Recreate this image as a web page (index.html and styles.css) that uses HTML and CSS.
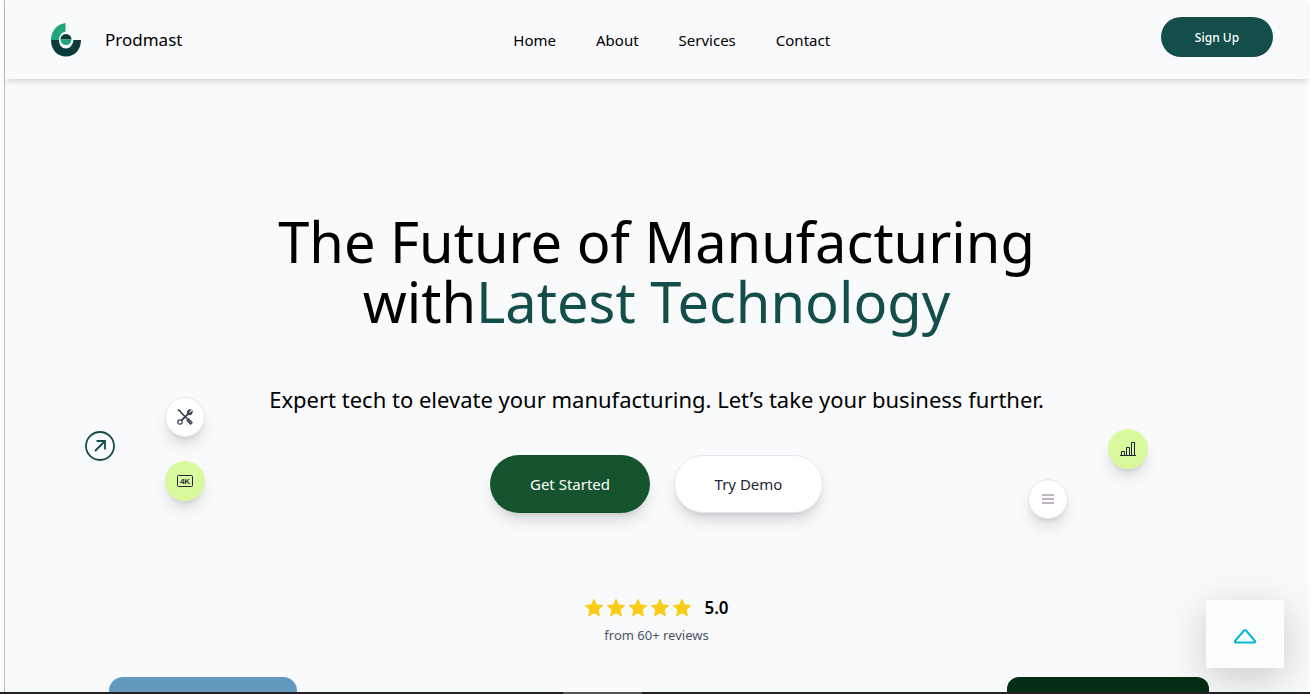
FILE: index.html
```html
<!DOCTYPE html>
<html lang="en">
<head>
<meta charset="utf-8">
<title>Prodmast</title>
<link rel="stylesheet" href="styles.css">
</head>
<body>
<div class="page">
  <header class="header">
    <a class="brand" href="#">
      <svg class="brand-logo" viewBox="0 0 32 36" aria-hidden="true">
        <path fill="#1fa67a" d="M1 18C1 9 7 2 15.500 1V9.500C11.500 10.500 9 14 9 18Z"/>
        <path fill="#0b3b3c" d="M1 18H9C9 23 12 26.500 16 26.500S22.500 23.500 23.500 18H31C31 28 24.500 34.500 16 34.500S1 28 1 18Z"/>
        <path fill="#0b3b3c" d="M10.500 17.500a5.500 5.500 0 0 1 11 0Z"/>
        <path fill="#1fa67a" d="M10.500 17.500a5.500 5.500 0 0 0 11 0Z"/>
      </svg>
      <span>Prodmast</span>
    </a>
    <nav class="nav">
      <a href="#">Home</a>
      <a href="#">About</a>
      <a href="#">Services</a>
      <a href="#">Contact</a>
    </nav>
    <button class="signup" type="button">Sign Up</button>
  </header>

  <main class="hero">
    <h1 class="title">The Future of Manufacturing<br>with<span class="accent">Latest Technology</span></h1>
    <p class="lead">Expert tech to elevate your manufacturing. Let’s take your business further.</p>
    <div class="actions">
      <button class="btn btn-primary" type="button">Get Started</button>
      <button class="btn btn-plain" type="button">Try Demo</button>
    </div>
    <div class="rating">
      <div class="score">
        <svg class="stars" viewBox="0 0 108 20" role="img" aria-label="5 stars">
          <defs><path id="star" d="M10 1.300 12.500 6.900 18.700 7.600 14.100 11.800 15.400 17.900 10 14.800 4.600 17.900 5.900 11.800 1.300 7.600 7.500 6.900Z" fill="#facc15" stroke="#facc15" stroke-width="1" stroke-linejoin="round"/></defs>
          <use href="#star"/><use href="#star" x="22"/><use href="#star" x="44"/><use href="#star" x="66"/><use href="#star" x="88"/>
        </svg>
        <strong>5.0</strong>
      </div>
      <p class="reviews">from 60+ reviews</p>
    </div>

    <svg class="float arrow" viewBox="0 0 30 30" fill="none" stroke="#134e4a" stroke-width="1.800" aria-hidden="true">
      <circle cx="15" cy="15" r="14"/><path d="M10 20 20 10M11.500 10H20v8.500"/>
    </svg>
    <span class="float badge badge-white tools">
      <svg viewBox="0 0 16 16" fill="none" stroke="#374151" aria-hidden="true">
        <path stroke-width="1.600" d="M.8 .8 3.200 2 4 3.500 12 11.500"/>
        <path stroke-width="2" d="M4.600 11.400 11.400 4.600"/>
        <circle cx="3" cy="13" r="2.200" stroke-width="1.200"/>
        <path stroke-width="1.200" d="M13.500 .8C11.500 .8 10 2.500 10.600 4.400L11.600 5.400C13.500 6 15.200 4.500 15.200 2.500L13.200 4.300 11.700 4.200V2.800Z"/>
        <path stroke-width="1.200" d="M10.200 11.500 11.800 10l3.400 3.500-1.700 1.700ZM11.500 11.800l2 2"/>
      </svg>
    </span>
    <span class="float badge badge-lime video">
      <svg viewBox="0 0 16 16" aria-hidden="true">
        <rect x=".5" y="2.500" width="15" height="11" rx="1" fill="none" stroke="#1f2937"/>
        <text class="video-label" x="8" y="11" text-anchor="middle">4K</text>
      </svg>
    </span>
    <span class="float badge badge-lime chart">
      <svg viewBox="0 0 16 16" fill="none" stroke="#1f2937" aria-hidden="true">
        <path d="M0 14.500H16M1.500 14.500v-4h3v4M6.500 14.500v-8h3v8M11.500 14.500v-13h3v13"/>
      </svg>
    </span>
    <span class="float badge badge-white menu">
      <svg viewBox="0 0 16 16" stroke="#bdb6c0" stroke-width="2" aria-hidden="true"><path d="M2 4H14M2 8H14M2 12H14"/></svg>
    </span>
  </main>

  <section class="cards">
    <div class="card card-blue"></div>
    <div class="card card-green"></div>
  </section>
</div>
<button class="to-top" type="button" aria-label="Back to top">
  <svg viewBox="0 0 24 16" fill="none" stroke="#06b6d4" stroke-width="2" stroke-linejoin="round" aria-hidden="true"><path d="M2 13 11 2.500Q12 1.500 13 2.500L22 13Q22.500 14.500 21 14.500H3Q1.500 14.500 2 13Z"/></svg>
</button>
<div class="edge"></div>
</body>
</html>
```
FILE: styles.css
```css
* { box-sizing: border-box; }
body {
  margin: 0;
  height: 100vh;
  overflow: hidden;
  background: #fff;
  color: #000;
  font-family: "Segoe UI", "Noto Sans", "Open Sans", sans-serif;
}
h1, p { margin: 0; font-weight: 400; }
a { color: inherit; text-decoration: none; }
button { font: inherit; cursor: pointer; border: 0; }
.page {
  min-height: 100vh;
  margin: 0 2px 0 4px;
  border-left: 1px solid #bdbdbd;
  background: #f9fafc;
}
.header {
  display: flex;
  justify-content: space-between;
  align-items: center;
  height: 79px;
  padding: 0 35px 0 45px;
  box-shadow: 0 4px 6px -1px rgba(0, 0, 0, .1), 0 2px 4px -2px rgba(0, 0, 0, .1);
}
.brand { display: flex; align-items: center; gap: 23px; font-size: 17px; }
.brand-logo { width: 32px; height: 36px; }
.nav { display: flex; gap: 40px; font-size: 15px; line-height: 20px; }
.signup {
  width: 112px;
  height: 40px;
  margin-bottom: 5px;
  border-radius: 20px;
  background: #134e4a;
  color: #fff;
  font-size: 12px;
  font-weight: 500;
}
.hero {
  position: relative;
  display: flex;
  flex-direction: column;
  align-items: center;
  padding-top: 132px;
  text-align: center;
}
.title { font-size: 56px; line-height: 60px; }
.accent { color: #134e4a; }
.lead { margin-top: 52px; font-size: 22px; line-height: 32px; }
.actions { display: flex; gap: 24px; margin-top: 40px; }
.btn {
  height: 58px;
  border-radius: 29px;
  font-size: 15px;
  box-shadow: 0 10px 15px -3px rgba(0, 0, 0, .14), 0 4px 6px -4px rgba(0, 0, 0, .14);
}
.btn-primary { width: 160px; background: #14532d; color: #fff; }
.btn-plain { width: 149px; background: #fff; border: 1px solid #e5e7eb; color: #1f2937; }
.rating { margin-top: 81px; }
.score { display: flex; align-items: center; gap: 12px; font-size: 17px; line-height: 28px; }
.score strong { font-weight: 600; }
.stars { width: 108px; height: 20px; }
.reviews { margin-top: 3px; font-size: 13px; line-height: 20px; color: #4b5563; }
.float { position: absolute; }
.arrow { left: 80px; top: 352px; width: 30px; height: 30px; }
.badge {
  display: grid;
  place-items: center;
  width: 40px;
  height: 40px;
  border-radius: 50%;
  box-shadow: 0 10px 15px -3px rgba(0, 0, 0, .14), 0 4px 6px -4px rgba(0, 0, 0, .14);
}
.badge svg { width: 16px; height: 16px; }
.badge-white { background: #fff; border: 1px solid #e5e7eb; }
.badge-lime { background: #d9f99d; }
.video-label { font: 700 8px "Liberation Sans", sans-serif; fill: #1f2937; }
.tools { left: 160px; top: 318px; }
.video { left: 160px; top: 382px; }
.chart { right: 160px; top: 350px; }
.menu { right: 240px; top: 400px; }
.cards {
  display: flex;
  justify-content: space-between;
  padding: 0 99px 0 104px;
  margin-top: 32px;
}
.card { height: 17px; }
.card-blue { width: 188px; border-radius: 14px 14px 0 0; background: #6199bf; }
.card-green { width: 202px; border-radius: 12px 12px 0 0; background: #052e16; }
.to-top {
  position: fixed;
  right: 26px;
  bottom: 26px;
  display: grid;
  place-items: center;
  width: 78px;
  height: 68px;
  padding: 4px 0 0;
  background: #fcfdfd;
  box-shadow: 0 10px 40px rgba(0, 0, 0, .2);
}
.to-top svg { width: 24px; height: 16px; }
.edge {
  position: fixed;
  left: 0;
  right: 0;
  bottom: 0;
  height: 2px;
  background: linear-gradient(to right, #231f23 43%, #555 43% 49%, #231f23 49%);
}
```
